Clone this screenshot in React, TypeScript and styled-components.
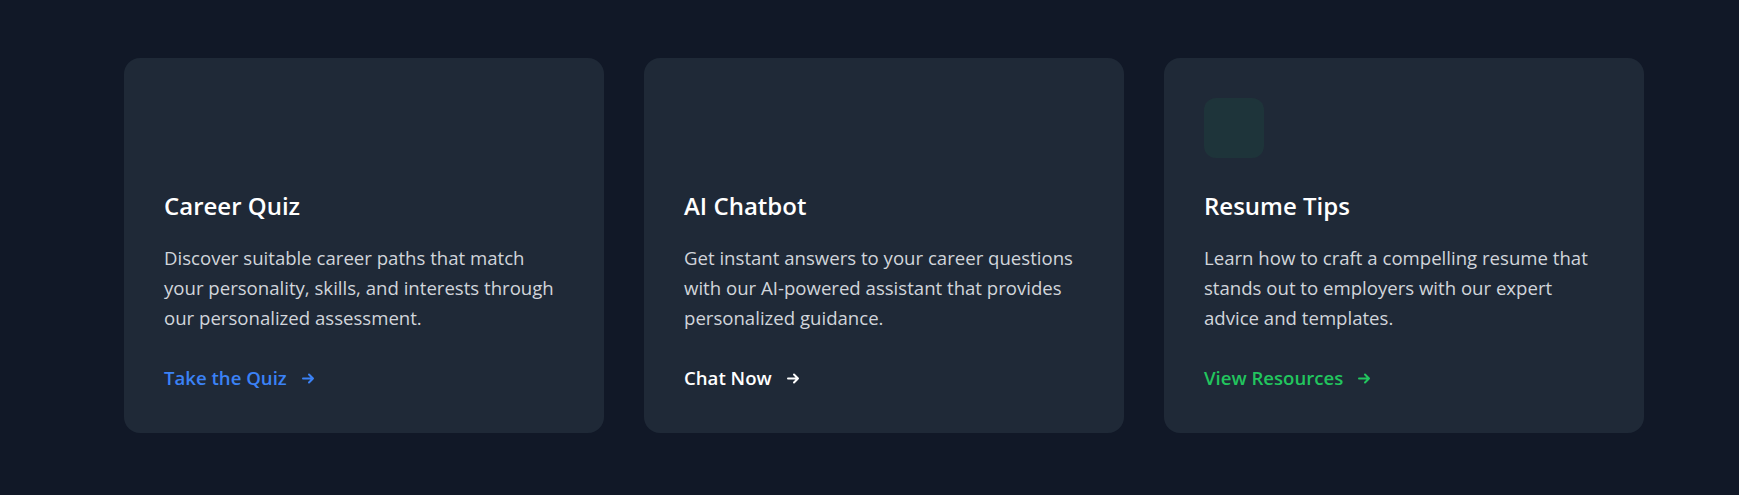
import styled, { createGlobalStyle } from "styled-components";

const GlobalStyle = createGlobalStyle`
  html, body {
    margin: 0;
    padding: 0;
    background: #111827;
  }
  body {
    font-family: "Open Sans", "Noto Sans", sans-serif;
  }
`;

const Section = styled.section`
  min-height: 495px;
  box-sizing: border-box;
  padding: 58px 0 0 124px;
  background: #111827;
`;

const Grid = styled.div`
  display: grid;
  grid-template-columns: repeat(3, 480px);
  gap: 40px;
`;

const Card = styled.div`
  background: #1f2937;
  border-radius: 16px;
  padding: 40px;
  height: 375px;
  box-sizing: border-box;
  display: flex;
  flex-direction: column;
  align-items: flex-start;
`;

const IconBox = styled.div<{ $tint?: string }>`
  width: 60px;
  height: 60px;
  border-radius: 12px;
  margin-bottom: 30px;
  background: ${(p) => p.$tint || "transparent"};
`;

const Title = styled.h3`
  margin: 0 0 20px;
  font-size: 24px;
  line-height: 35px;
  font-weight: 600;
  color: #ffffff;
`;

const Text = styled.p`
  margin: 0 0 30px;
  font-size: 18.6px;
  line-height: 30px;
  color: #d1d5db;
`;

const Link = styled.a<{ $color: string }>`
  display: inline-flex;
  align-items: center;
  font-size: 18.6px;
  line-height: 30px;
  font-weight: 600;
  color: ${(p) => p.$color};
  text-decoration: none;
  cursor: pointer;
`;

const Arrow = styled.svg`
  margin-left: 15px;
  margin-top: 1px;
`;

const ArrowIcon = () => (
  <Arrow width="13" height="11" viewBox="0 0 13 11" fill="none">
    <path d="M1 5.5h10M7 1.5l4 4-4 4" stroke="currentColor" strokeWidth="2" strokeLinecap="round" strokeLinejoin="round" />
  </Arrow>
);

const cards = [
  {
    title: "Career Quiz",
    text: "Discover suitable career paths that match your personality, skills, and interests through our personalized assessment.",
    link: "Take the Quiz",
    color: "#3b82f6",
  },
  {
    title: "AI Chatbot",
    text: "Get instant answers to your career questions with our AI-powered assistant that provides personalized guidance.",
    link: "Chat Now",
    color: "#ffffff",
  },
  {
    title: "Resume Tips",
    text: "Learn how to craft a compelling resume that stands out to employers with our expert advice and templates.",
    link: "View Resources",
    color: "#22c55e",
    tint: "rgba(34, 197, 94, 0.07)",
  },
];

const App = () => {
  return (
    <>
      <GlobalStyle />
      <Section>
        <Grid>
          {cards.map((card) => (
            <Card key={card.title}>
              <IconBox $tint={card.tint} />
              <Title>{card.title}</Title>
              <Text>{card.text}</Text>
              <Link $color={card.color}>
                {card.link}
                <ArrowIcon />
              </Link>
            </Card>
          ))}
        </Grid>
      </Section>
    </>
  );
};

export default App;
